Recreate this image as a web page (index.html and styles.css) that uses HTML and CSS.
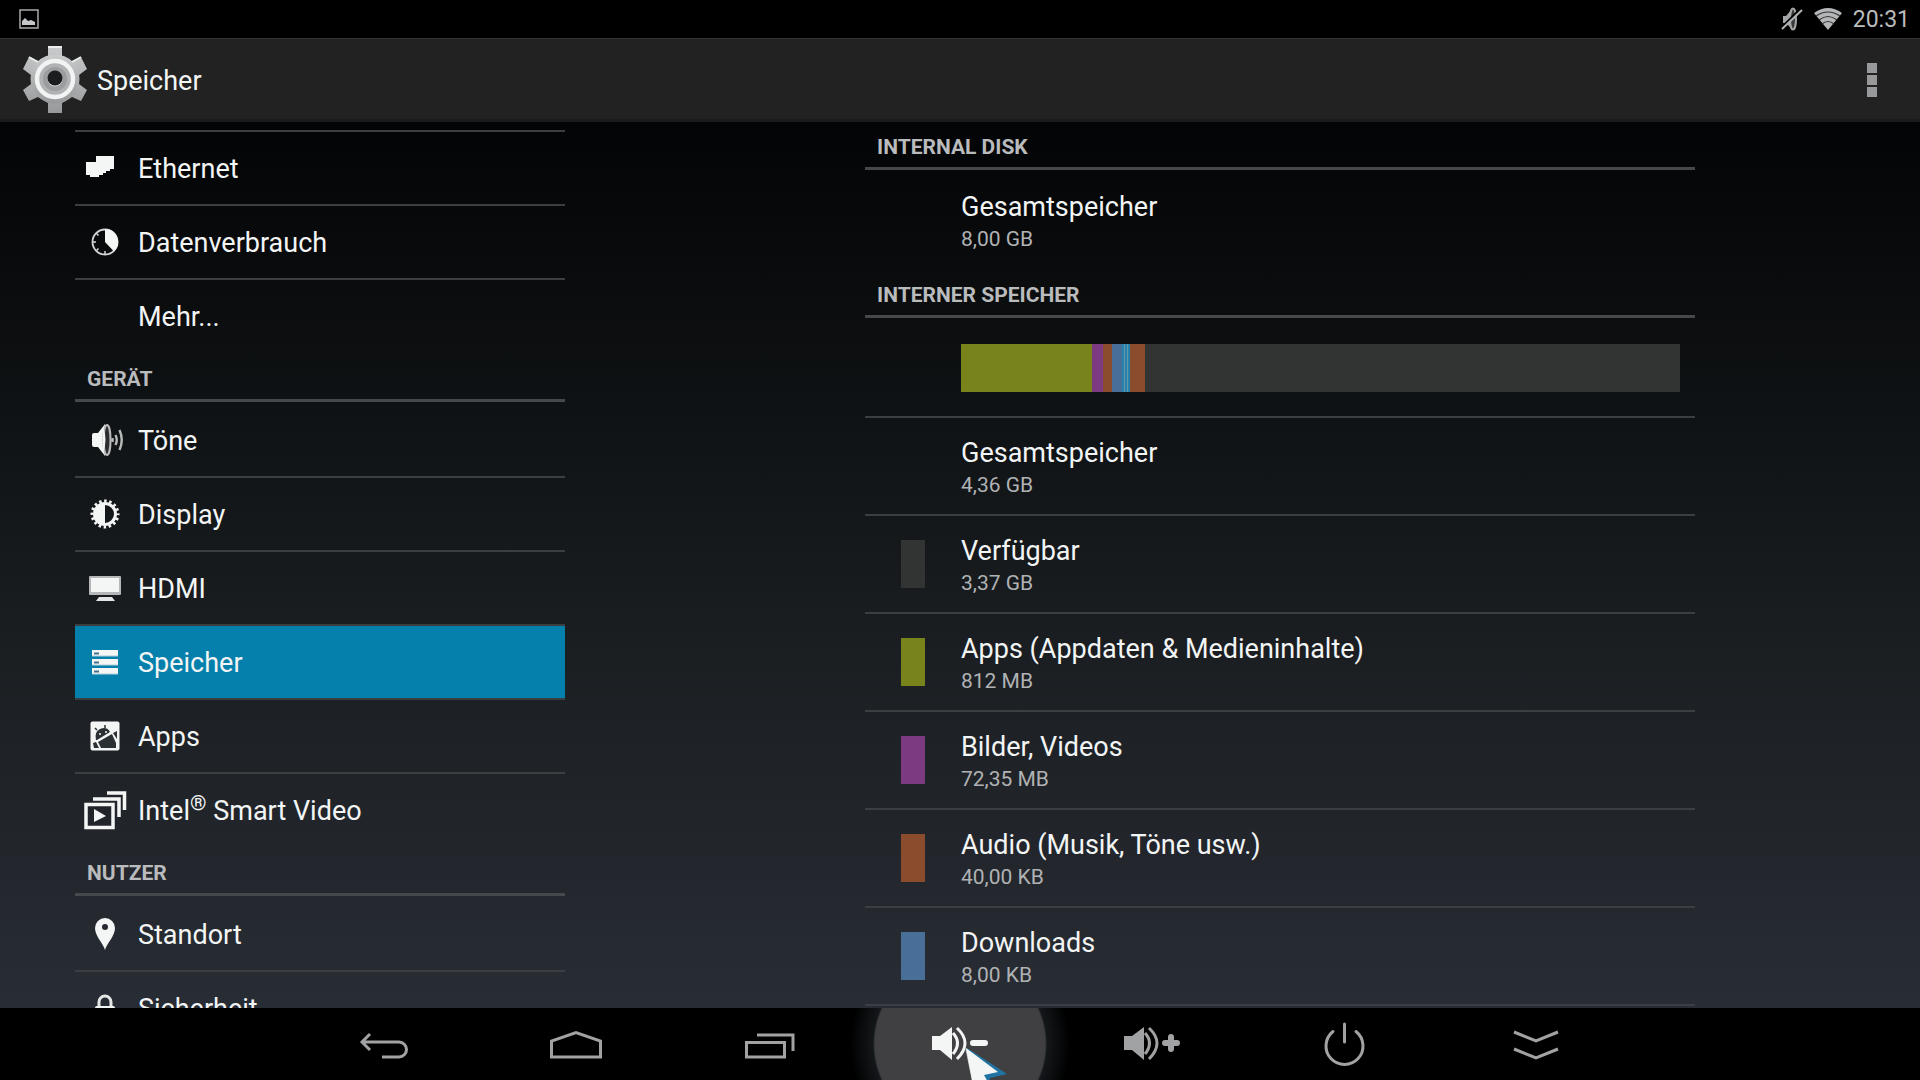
FILE: index.html
```html
<!DOCTYPE html>
<html lang="de">

<head>
  <meta charset="UTF-8" />
  <meta name="viewport" content="width=device-width, initial-scale=1.0">
  <title>Speicher</title>
  <link rel="stylesheet" href="styles.css">
</head>

<body>
  <div class="statusbar">
    <svg class="status-bild" width="20" height="20" viewBox="0 0 20 20">
      <rect x="1" y="1" width="18" height="18" fill="none" stroke="#a9abad" stroke-width="1.5" />
      <path d="M3 16V12L6 9L9 12L12 11L14 12L16 13V16Z" fill="#c4c6c8" />
    </svg>
    <div class="status-rechts">
      <svg width="22" height="24" viewBox="0 0 22 24">
        <path d="M2 9H5L11 2V22L5 16H2Z" fill="#a4a6a8" />
        <ellipse cx="12" cy="12" rx="3" ry="10.5" fill="#3a3b3c" stroke="#a4a6a8" stroke-width="2" />
        <path d="M1 20L19 2" stroke="#000" stroke-width="2" />
        <path d="M1 22L21 3" stroke="#b0b2b4" stroke-width="2" />
      </svg>
      <svg width="30" height="24" viewBox="0 0 30 24">
        <path d="M1 6Q15 -4 29 6L15 23Z" fill="#b4b6b8" />
        <path d="M3 9Q15 1 27 9M6 13Q15 6 24 13M9 17Q15 12 21 17" fill="none" stroke="#333" stroke-width="1.2" />
      </svg>
      <span class="uhr">20:31</span>
    </div>
  </div>

  <header class="actionbar">
    <svg width="72" height="72" viewBox="0 0 72 72">
      <defs>
        <linearGradient id="metall" x1="0" y1="0" x2="0" y2="1">
          <stop offset="0" stop-color="#c9cbcd" />
          <stop offset="1" stop-color="#97999b" />
        </linearGradient>
      </defs>
      <g fill="url(#metall)">
        <path d="M29 3H43V13L53 18L62 14L68 26L60 32V41L68 47L62 58L53 54L43 60V70H29V60L19 54L10 58L4 47L12 41V32L4 26L10 14L19 18L29 13Z" />
        <circle cx="36" cy="36" r="24.5" />
      </g>
      <path d="M29 4H43M10 14L19 19M62 14L53 19" stroke="#eceeee" stroke-width="2" />
      <circle cx="36" cy="36" r="18" fill="#b0b2b4" stroke="#f2f4f4" stroke-width="4.5" />
      <circle cx="36" cy="36" r="12" fill="#9b9d9f" />
      <circle cx="36" cy="36" r="7.5" fill="#d5d7d7" />
      <circle cx="36" cy="35" r="7.5" fill="#1b1c1d" />
    </svg>
    <h1>Speicher</h1>
    <button type="button" class="btn-menue" aria-label="Weitere Optionen">
      <span></span><span></span><span></span>
    </button>
  </header>

  <main class="inhalt">
    <nav class="kategorien">
      <ul class="liste liste-oben">
        <li><a href="#ethernet">
          <svg viewBox="0 0 48 48"><path d="M15 12H33V25H29V27H25V29H22V31H18V33H9V31H5V18H15Z" fill="#f4f6f6" /></svg>
          Ethernet</a></li>
        <li><a href="#daten">
          <svg viewBox="0 0 48 48">
            <circle cx="24" cy="24" r="12.5" fill="none" stroke="#d4d6d6" stroke-width="1.8" />
            <path d="M24 11A13 13 0 0 1 33 33.5L24 24Z" fill="#f4f6f6" />
            <path d="M12 24H15M24 36V33M15.5 15.5L17.5 17.5M15.5 32.5L17.5 30.5" stroke="#d4d6d6" stroke-width="1.5" />
          </svg>
          Datenverbrauch</a></li>
        <li><a href="#mehr"><span class="leer"></span>Mehr...</a></li>
      </ul>

      <h2>GERÄT</h2>
      <ul class="liste">
        <li><a href="#toene">
          <svg viewBox="0 0 48 48">
            <path d="M11 19Q11 17 13 17H17L24 8V40L17 31H13Q11 31 11 29Z" fill="#f4f6f6" />
            <ellipse cx="26" cy="24" rx="3.5" ry="15" fill="#2a2e30" stroke="#b9bbbb" stroke-width="2" />
            <path d="M22 11Q27 24 22 37Z" fill="#f4f6f6" />
            <path d="M31.5 22V26M34.5 19Q37 24 34.5 29M38.5 14Q43 24 38.5 34" fill="none" stroke="#b9bbbb" stroke-width="2.4" />
          </svg>
          Töne</a></li>
        <li><a href="#display">
          <svg viewBox="0 0 48 48">
            <circle cx="24" cy="24" r="13" fill="none" stroke="#f4f6f6" stroke-width="3" stroke-dasharray="2.5 2.605" stroke-dashoffset="1.25" />
            <circle cx="24" cy="24" r="10.5" fill="none" stroke="#f4f6f6" stroke-width="3" />
            <path d="M24 13A11 11 0 0 0 24 35Z" fill="#f4f6f6" />
          </svg>
          Display</a></li>
        <li><a href="#hdmi">
          <svg viewBox="0 0 48 48">
            <rect x="8" y="12" width="32" height="19" rx="1" fill="#b5b7b8" />
            <rect x="10" y="14" width="28" height="14" fill="#f4f6f6" />
            <path d="M18 33H31L34 37H15Z" fill="#e4e6e6" />
          </svg>
          HDMI</a></li>
        <li class="aktiv"><a href="#speicher" aria-current="page">
          <svg viewBox="0 0 48 48">
            <path d="M11 12H37V18H11ZM11 21H37V27H11ZM11 30H37V36H11Z" fill="#f4f6f6" />
            <path d="M11 18H37M11 27H37M11 36H37" stroke="#b5cfda" />
            <path d="M13 15.5H18M13 24.5H18M13 33.5H18" stroke="#47708a" stroke-width="2" />
          </svg>
          Speicher</a></li>
        <li><a href="#apps">
          <svg viewBox="0 0 48 48">
            <rect x="9.5" y="9.5" width="29" height="29" rx="2" fill="#f4f6f6" />
            <g fill="#2b3034">
              <path d="M15 28Q13 20 19 17Q26 14 29 20L16 28Z" />
              <path d="M17 30L31 22L35 31V36H20Z" />
              <path d="M12 31L15 30L18 36H13ZM32 21L36 19V27Z" />
            </g>
            <path d="M16 18L14 16M24 16V13" stroke="#2b3034" stroke-width="1.5" />
            <path d="M18 22H20M24 20H26" stroke="#f4f6f6" stroke-width="1.5" />
          </svg>
          Apps</a></li>
        <li><a href="#video">
          <svg viewBox="0 0 48 48">
            <path d="M5 18.5H32V41.5H5Z" fill="none" stroke="#f4f6f6" stroke-width="3.5" />
            <path d="M13 23V36L25 30Z" fill="#f4f6f6" />
            <path d="M12 13H38V31M26 7H43.5V24" fill="none" stroke="#f4f6f6" stroke-width="3.5" />
          </svg>
          <span>Intel<sup>®</sup> Smart Video</span></a></li>
      </ul>

      <h2>NUTZER</h2>
      <ul class="liste">
        <li><a href="#standort">
          <svg viewBox="0 0 48 48">
            <path d="M24 40C22 33 14 26 14 18A10 10 0 0 1 34 18C34 26 26 33 24 40ZM24 14A3 3 0 1 0 24 20A3 3 0 1 0 24 14Z" fill="#f4f6f6" fill-rule="evenodd" />
          </svg>
          Standort</a></li>
        <li><a href="#sicherheit">
          <svg viewBox="0 0 48 48">
            <path d="M18 24V18A6 6 0 0 1 30 18V24" fill="none" stroke="#e4e6e6" stroke-width="3" />
            <rect x="14" y="22" width="20" height="16" rx="2" fill="#f4f6f6" />
          </svg>
          Sicherheit</a></li>
      </ul>
    </nav>

    <section class="details">
      <h2>INTERNAL DISK</h2>
      <ul class="werte">
        <li>
          <div><p class="name">Gesamtspeicher</p><p class="wert">8,00 GB</p></div>
        </li>
      </ul>

      <h2>INTERNER SPEICHER</h2>
      <ul class="werte">
        <li>
          <div class="balken">
            <span class="apps" style="width: 18.2%"></span>
            <span class="bilder" style="width: 1.6%"></span>
            <span class="audio" style="width: 1.2%"></span>
            <span class="downloads" style="width: 1.4%"></span>
            <span class="cache" style="width: 1.1%"></span>
            <span class="audio" style="width: 2.1%"></span>
          </div>
        </li>
        <li>
          <div><p class="name">Gesamtspeicher</p><p class="wert">4,36 GB</p></div>
        </li>
        <li>
          <span class="farbe frei"></span>
          <div><p class="name">Verfügbar</p><p class="wert">3,37 GB</p></div>
        </li>
        <li>
          <span class="farbe apps"></span>
          <div><p class="name">Apps (Appdaten &amp; Medieninhalte)</p><p class="wert">812 MB</p></div>
        </li>
        <li>
          <span class="farbe bilder"></span>
          <div><p class="name">Bilder, Videos</p><p class="wert">72,35 MB</p></div>
        </li>
        <li>
          <span class="farbe audio"></span>
          <div><p class="name">Audio (Musik, Töne usw.)</p><p class="wert">40,00 KB</p></div>
        </li>
        <li>
          <span class="farbe downloads"></span>
          <div><p class="name">Downloads</p><p class="wert">8,00 KB</p></div>
        </li>
        <li></li>
      </ul>
    </section>
  </main>

  <footer class="navbar">
    <button type="button" aria-label="Zurück">
      <svg viewBox="0 0 72 72"><path d="M14 34H51A7.5 7.5 0 0 1 51 49H34M22 26L14 34L22 42" /></svg>
    </button>
    <button type="button" aria-label="Startseite">
      <svg viewBox="0 0 72 72"><path d="M11.5 49V33L36 24.5L60.5 33V49Z" /></svg>
    </button>
    <button type="button" aria-label="Letzte Apps">
      <svg viewBox="0 0 72 72"><path d="M14.5 34.5H52.5V49H14.5ZM25 27H61V43" /></svg>
    </button>
    <button type="button" class="gedrueckt" aria-label="Leiser">
      <svg viewBox="0 0 72 72">
        <path class="voll" d="M8 28H16L28 19V52L16 42H8Z" />
        <path d="M29 25Q38 35 29 46M33 20Q49 35 33 51" />
        <path class="zeichen" d="M49 35H61" />
      </svg>
      <svg class="zeiger" viewBox="0 0 44 40">
        <path d="M3 2L43 28L26 32L24 40H10Z" fill="#1f74a4" />
        <path d="M1 1L9 40H13L12 14Z" fill="#b9bbbd" />
        <path d="M2 2L34 26L20 29L25 38L12 40L8 34Z" fill="#f4f6f6" />
      </svg>
    </button>
    <button type="button" aria-label="Lauter">
      <svg viewBox="0 0 72 72">
        <path class="voll" d="M8 28H16L28 19V52L16 42H8Z" />
        <path d="M29 25Q38 35 29 46M33 20Q49 35 33 51" />
        <path class="zeichen" d="M49 35H61M55 29V41" />
      </svg>
    </button>
    <button type="button" aria-label="Ausschalten">
      <svg viewBox="0 0 72 72"><path d="M25 23.5A18.5 18.5 0 1 0 48 23.5M36.5 16V34" stroke-linecap="round" /></svg>
    </button>
    <button type="button" aria-label="Leiste ausblenden">
      <svg viewBox="0 0 72 72"><path d="M14 24L36 33L58 24M14 41L36 50L58 41" /></svg>
    </button>
  </footer>
</body>

</html>
```

FILE: styles.css
```css
* {
  box-sizing: border-box;
}

body {
  margin: 0;
  height: 100vh;
  display: flex;
  flex-direction: column;
  overflow: hidden;
  background-color: #000;
  color: #f3f5f5;
  font-family: Roboto, sans-serif;
  font-size: 27px;
}

h1,
h2,
p,
ul {
  margin: 0;
  padding: 0;
}

ul {
  list-style: none;
}

button {
  padding: 0;
  border: none;
  background: none;
  cursor: pointer;
}

/* Statusleiste */
.statusbar {
  flex: none;
  height: 38px;
  padding: 0 10px 0 19px;
  display: flex;
  align-items: center;
  justify-content: space-between;
}

.status-rechts {
  display: flex;
  align-items: center;
  gap: 10px;
}

.uhr {
  padding-top: 2px;
  color: #b9bbbd;
  font-size: 23px;
  line-height: 36px;
}

/* Titelleiste */
.actionbar {
  flex: none;
  height: 84px;
  padding: 0 43px 0 19px;
  display: flex;
  align-items: center;
  gap: 6px;
  background-color: #222;
  border-top: 1px solid #323232;
  border-bottom: 3px solid #191c1f;
}

.actionbar h1 {
  flex: 1;
  padding-top: 3px;
  font-size: 27px;
  font-weight: 400;
}

.btn-menue {
  padding-top: 2px;
  display: flex;
  flex-direction: column;
  gap: 2px;
}

.btn-menue span {
  width: 10px;
  height: 10px;
  background-color: #97999b;
}

/* Inhalt */
.inhalt {
  flex: 1;
  min-height: 0;
  display: flex;
  background: linear-gradient(#030405, #0f1214 32%, #1d2125 66%, #282c34);
}

.kategorien {
  width: calc(100% / 3);
  padding: 8px 75px 0;
  overflow: hidden;
}

.details {
  width: calc(200% / 3);
  padding: 0 225px;
  overflow: hidden;
}

h2 {
  height: 50px;
  margin-bottom: 2px;
  padding: 11px 12px 0;
  border-bottom: 3px solid #46484b;
  color: #b9bbbd;
  font-size: 21px;
  font-weight: 700;
  line-height: 32px;
}

.details h2:first-child {
  height: 48px;
  padding-top: 9px;
}

.liste li + li,
.liste-oben {
  border-top: 2px solid #3c3f42;
}

.liste a {
  height: 72px;
  padding: 2px 0 0 6px;
  display: flex;
  align-items: center;
  gap: 9px;
  color: inherit;
  text-decoration: none;
}

.liste svg,
.leer {
  flex: none;
  width: 48px;
  height: 48px;
  margin-bottom: 2px;
}

.liste sup {
  font-size: 21px;
  line-height: 0;
}

.aktiv {
  background-color: #0580ac;
}

/* Speicherwerte */
.werte li {
  height: 96px;
  padding: 0 15px 0 96px;
  display: flex;
  align-items: center;
}

.werte li + li {
  height: 98px;
  border-top: 2px solid #3c3f42;
}

.name {
  padding-top: 2px;
  line-height: 36px;
}

.wert {
  color: #b0b2b4;
  font-size: 21px;
  line-height: 29px;
}

.farbe {
  width: 24px;
  height: 48px;
  margin: 0 36px 0 -60px;
}

.balken {
  flex: 1;
  height: 48px;
  display: flex;
  background-color: #323433;
}

.frei {
  background-color: #323433;
}

.apps {
  background-color: #78831c;
}

.bilder {
  background-color: #7c3b80;
}

.audio {
  background-color: #8a4c2d;
}

.downloads {
  background-color: #496f98;
}

.cache {
  background: repeating-linear-gradient(90deg, #2483ad 0 2px, #6795aa 2px 3px);
}

/* Navigationsleiste */
.navbar {
  flex: none;
  height: 72px;
  display: flex;
  justify-content: center;
  overflow: hidden;
}

.navbar button {
  flex: 0 1 192px;
  position: relative;
}

.navbar svg {
  width: 72px;
  height: 72px;
  display: block;
  margin: 0 auto;
  fill: none;
  stroke: #a0a2a4;
  stroke-width: 3;
}

.navbar .voll {
  fill: #a0a2a4;
  stroke: none;
}

.navbar .zeichen {
  stroke-width: 6;
  stroke-linecap: round;
}

.navbar .gedrueckt {
  background: radial-gradient(circle at center, #404042 85px, #14171a 87px, #000 110px);
  flex-basis: 220px;
  margin: 0 -14px;
}

.navbar .gedrueckt svg {
  stroke: #f4f6f6;
}

.navbar .gedrueckt .voll {
  fill: #f4f6f6;
}

.navbar .gedrueckt .zeiger {
  position: absolute;
  left: calc(50% + 4px);
  bottom: -6px;
  width: 44px;
  height: 40px;
  stroke: none;
}
```
